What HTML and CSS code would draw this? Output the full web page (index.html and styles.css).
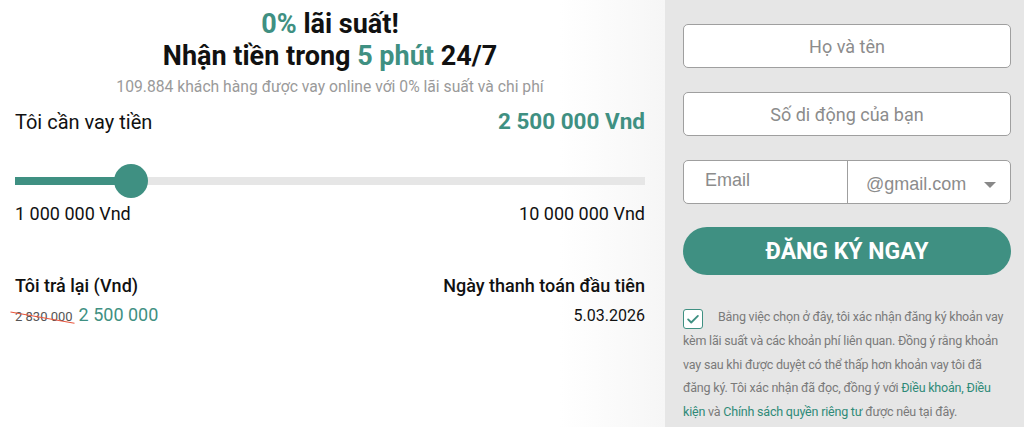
FILE: index.html
```html
<!DOCTYPE html>
<html lang="vi">
<head>
<meta charset="utf-8">
<title>Vay online</title>
<link rel="stylesheet" href="styles.css">
</head>
<body>
<div class="page">
  <section class="calc">
    <h1 class="title"><span class="accent">0%</span> lãi suất!</h1>
    <h2 class="title">Nhận tiền trong <span class="accent">5 phút</span> 24/7</h2>
    <p class="sub">109.884 khách hàng được vay online với 0% lãi suất và chi phí</p>

    <div class="row amount-row">
      <span class="label">Tôi cần vay tiền</span>
      <span class="amount">2 500 000 Vnd</span>
    </div>

    <div class="slider">
      <div class="track"><div class="fill" style="width: 18.4%"></div></div>
      <div class="thumb" style="left: 18.4%"></div>
    </div>

    <div class="row limits">
      <span>1 000 000 Vnd</span>
      <span>10 000 000 Vnd</span>
    </div>

    <div class="row pay-head">
      <span>Tôi trả lại (Vnd)</span>
      <span>Ngày thanh toán đầu tiên</span>
    </div>
    <div class="row pay-vals">
      <span class="prices"><span class="old">2 830 000</span><span class="new">2 500 000</span></span>
      <span class="date">5.03.2026</span>
    </div>
  </section>

  <aside class="form">
    <div class="field">Họ và tên</div>
    <div class="field">Số di động của bạn</div>
    <div class="field email">
      <span class="email-input">Email</span>
      <span class="email-domain">@gmail.com<span class="caret"></span></span>
    </div>
    <button class="cta">ĐĂNG KÝ NGAY</button>
    <p class="consent"><span class="check"><svg viewBox="0 0 20 20" width="14" height="14"><path d="M3 10.5l4.5 4.5L17 5.5" fill="none" stroke="#3f9082" stroke-width="2.6" stroke-linecap="round" stroke-linejoin="round"/></svg></span>Bằng việc chọn ở đây, tôi xác nhận đăng ký khoản vay<br>kèm lãi suất và các khoản phí liên quan. Đồng ý rằng khoản<br>vay sau khi được duyệt có thể thấp hơn khoản vay tôi đã<br>đăng ký. Tôi xác nhận đã đọc, đồng ý với <a href="#">Điều khoản, Điều<br>kiện</a> và <a href="#">Chính sách quyền riêng tư</a> được nêu tại đây.</p>
  </aside>
</div>
</body>
</html>
```

FILE: styles.css
```css
* { box-sizing: border-box; }
html, body { margin: 0; padding: 0; }
body {
  font-family: Roboto, "Liberation Sans", sans-serif;
  color: #111;
  background: #fff;
  width: 1024px;
  height: 427px;
  overflow: hidden;
}
.page {
  display: flex;
  height: 427px;
}
.calc {
  width: 665px;
  flex-shrink: 0;
  padding: 8px 20px 0 15px;
  background: linear-gradient(to right, #fff 0, #fff 560px, #f6f6f6 665px);
}
.title {
  margin: 0;
  text-align: center;
  font-size: 27px;
  font-weight: 700;
  line-height: 32px;
}
.accent { color: #3f9082; }
.sub {
  margin: 5px 0 0;
  text-align: center;
  font-size: 15.7px;
  color: #9a9a9a;
  line-height: 20px;
}
.row {
  display: flex;
  justify-content: space-between;
  align-items: baseline;
}
.amount-row { margin-top: 10px; line-height: 28px; }
.label { font-size: 20px; }
.amount { font-size: 22.5px; font-weight: 700; color: #3f9082; }
.slider {
  position: relative;
  height: 34px;
  margin-top: 28px;
}
.track {
  position: absolute;
  left: 0; right: 0; top: 13px;
  height: 8px;
  background: #e6e6e6;
}
.fill {
  height: 100%;
  background: #3f9082;
}
.thumb {
  position: absolute;
  top: 0;
  width: 34px;
  height: 34px;
  margin-left: -17px;
  border-radius: 50%;
  background: #3f9082;
}
.limits { margin-top: 5px; font-size: 18px; line-height: 22px; }
.pay-head { margin-top: 50px; font-size: 18px; font-weight: 500; line-height: 22px; }
.pay-vals { margin-top: 6px; line-height: 24px; }
.old {
  position: relative;
  font-size: 13px;
  color: #555;
}
.old::after {
  content: "";
  position: absolute;
  left: -5px; right: -2px; top: 50%;
  height: 1px;
  background: #e8573f;
  transform: rotate(10deg);
}
.new { margin-left: 6px; font-size: 18px; color: #3f9082; }
.date { font-size: 16px; }

.form {
  flex: 1;
  background: #e6e6e6;
  padding: 24px 13px 0 18px;
  display: flex;
  flex-direction: column;
}
.field {
  flex-shrink: 0;
  height: 44px;
  border: 1px solid #9f9f9f;
  border-radius: 5px;
  background: #fff;
  display: flex;
  align-items: center;
  justify-content: center;
  font-size: 18px;
  color: #8c8c8c;
  margin-bottom: 24px;
}
.email {
  justify-content: flex-start;
  font-family: "Liberation Sans", Arial, sans-serif;
  font-size: 18px;
  margin-bottom: 23px;
}
.email-input {
  width: 164px;
  padding: 9px 0 0 21px;
  border-right: 1px solid #9f9f9f;
  align-self: stretch;
}
.email-domain {
  flex: 1;
  display: flex;
  align-items: center;
  padding: 4px 14px 0 18px;
  height: 100%;
  justify-content: space-between;
}
.caret {
  width: 0; height: 0;
  border-left: 6px solid transparent;
  border-right: 6px solid transparent;
  border-top: 6px solid #888;
  margin-top: 2px;
}
.cta {
  flex-shrink: 0;
  height: 48px;
  border: none;
  border-radius: 24px;
  background: #3f9082;
  color: #fff;
  font-family: Roboto, sans-serif;
  font-weight: 700;
  font-size: 23px;
  padding: 0;
}
.consent {
  flex-shrink: 0;
  margin: 30px -12px 0 0;
  font-size: 12.5px;
  letter-spacing: -0.2px;
  line-height: 23.5px;
  color: #7a7a7a;
  white-space: nowrap;
}
.check {
  display: inline-flex;
  vertical-align: -5px;
  align-items: center;
  justify-content: center;
  width: 20px; height: 20px;
  border: 1.5px solid #3f9082;
  border-radius: 3px;
  background: #fff;
  margin-right: 15px;
}
.consent a { color: #2f8a78; text-decoration: none; font-weight: 400; }
```
